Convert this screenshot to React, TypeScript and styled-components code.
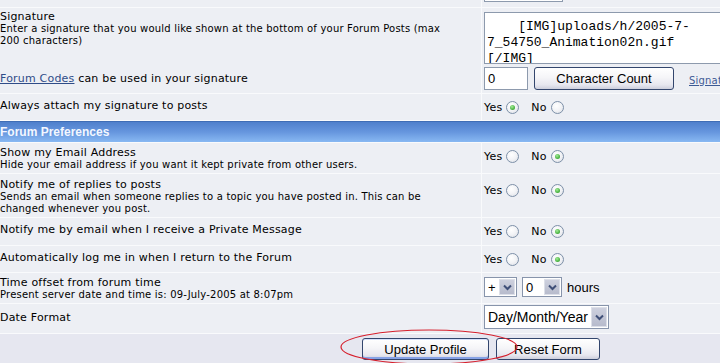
import React from 'react'
import styled, { createGlobalStyle, css } from 'styled-components'

const GlobalStyle = createGlobalStyle`
    html, body {
        margin: 0;
        padding: 0;
        overflow: hidden;
        background: #e6e7f0;
    }
    body {
        font-family: 'DejaVu Sans', Verdana, sans-serif;
        color: #000;
    }
`

function YesNo({ name, yes }: { name: string; yes: boolean }) {
    return (
        <Choice>
            <ChoiceLabel>
                Yes <Radio name={name} defaultChecked={yes} />
            </ChoiceLabel>
            <ChoiceLabel $second>
                No <Radio name={name} defaultChecked={!yes} />
            </ChoiceLabel>
        </Choice>
    )
}

function Select({ value, width, large }: { value: string; width: number; large?: boolean }) {
    return (
        <SelectBox $w={width} $large={large}>
            <SelectText>{value}</SelectText>
            <SelectArrow>
                <svg width="9" height="7" viewBox="0 0 9 7">
                    <polyline points="1,1.5 4.5,5 8,1.5" fill="none" stroke="#3f4f78" strokeWidth="2" />
                </svg>
            </SelectArrow>
        </SelectBox>
    )
}

export default function App() {
    return (
        <>
            <GlobalStyle />
            <Page>
                <Row $h={7}>
                    <Left />
                    <Right>
                        <CutInput />
                    </Right>
                </Row>

                <Row $h={85}>
                    <Left $pt={2}>
                        <Title>Signature</Title>
                        <Desc>
                            Enter a signature that you would like shown at the bottom of your Forum Posts (max
                            <br />
                            200 characters)
                        </Desc>
                        <Title $mt={25}>
                            <Link href="#">Forum Codes</Link> can be used in your signature
                        </Title>
                    </Left>
                    <Right $pt={4}>
                        <SigArea
                            readOnly
                            defaultValue={'    [IMG]uploads/h/2005-7-\n7_54750_Animation02n.gif\n[/IMG]'}
                        />
                        <Controls>
                            <CountInput readOnly defaultValue="0" />
                            <XpButton $w={140} $h={23}>Character Count</XpButton>
                            <SmallLink href="#">Signat</SmallLink>
                        </Controls>
                    </Right>
                </Row>

                <Row $h={26}>
                    <Left $pt={5}>
                        <Title>Always attach my signature to posts</Title>
                    </Left>
                    <Right $pt={5}>
                        <YesNo name="sig" yes />
                    </Right>
                </Row>

                <Ledger>Forum Preferences</Ledger>

                <Row $h={30}>
                    <Left $pt={3}>
                        <Title>Show my Email Address</Title>
                        <Desc>Hide your email address if you want it kept private from other users.</Desc>
                    </Left>
                    <Right $pt={5}>
                        <YesNo name="email" yes={false} />
                    </Right>
                </Row>

                <Row $h={43}>
                    <Left $pt={4}>
                        <Title>Notify me of replies to posts</Title>
                        <Desc>
                            Sends an email when someone replies to a topic you have posted in. This can be
                            <br />
                            changed whenever you post.
                        </Desc>
                    </Left>
                    <Right $pt={8}>
                        <YesNo name="replies" yes={false} />
                    </Right>
                </Row>

                <Row $h={27}>
                    <Left $pt={5}>
                        <Title>Notify me by email when I receive a Private Message</Title>
                    </Left>
                    <Right $pt={5}>
                        <YesNo name="pm" yes={false} />
                    </Right>
                </Row>

                <Row $h={26}>
                    <Left $pt={5}>
                        <Title>Automatically log me in when I return to the Forum</Title>
                    </Left>
                    <Right $pt={5}>
                        <YesNo name="autolog" yes={false} />
                    </Right>
                </Row>

                <Row $h={30}>
                    <Left $pt={3}>
                        <Title>Time offset from forum time</Title>
                        <Desc>Present server date and time is: 09-July-2005 at 8:07pm</Desc>
                    </Left>
                    <Right $pt={4}>
                        <Controls $gap={5}>
                            <Select value="+" width={33} />
                            <Select value="0" width={40} />
                            <Hours>hours</Hours>
                        </Controls>
                    </Right>
                </Row>

                <Row $h={29}>
                    <Left $pt={7}>
                        <Title>Date Format</Title>
                    </Left>
                    <Right $pt={1}>
                        <Select value="Day/Month/Year" width={125} large />
                    </Right>
                </Row>

                <ButtonRow>
                    <XpButton $w={127} $h={22} $default>Update Profile</XpButton>
                    <XpButton $w={104} $h={22}>Reset Form</XpButton>
                </ButtonRow>

                <Circle width="180" height="40" viewBox="0 0 180 40">
                    <ellipse cx="89" cy="18" rx="88" ry="17" fill="none" stroke="#d61f2c" strokeWidth="1.2" />
                </Circle>
            </Page>
        </>
    )
}

const Page = styled.div`
    position: relative;
    width: 962px;
    display: flex;
    flex-direction: column;
    gap: 1px;
    background: #f9fafc;
`

const Row = styled.div<{ $h: number }>`
    display: grid;
    grid-template-columns: 481px 1fr;
    column-gap: 1px;
    height: ${p => p.$h}px;
`

const Left = styled.div<{ $pt?: number }>`
    box-sizing: border-box;
    background: #edeff4;
    padding-top: ${p => p.$pt ?? 0}px;
    overflow: hidden;
    white-space: nowrap;
`

const Right = styled.div<{ $pt?: number }>`
    box-sizing: border-box;
    background: #edeff4;
    padding: ${p => p.$pt ?? 0}px 0 0 2px;
    overflow: hidden;
`

const Title = styled.div<{ $mt?: number }>`
    font-size: 11px;
    line-height: 13px;
    letter-spacing: 0.2px;
    margin-top: ${p => p.$mt ?? 0}px;
`

const Desc = styled.div`
    font-size: 10px;
    line-height: 12px;
    letter-spacing: 0.2px;
`

const Link = styled.a`
    color: #2f4c88;
    text-decoration: underline;
`

const SmallLink = styled.a`
    margin-left: 9px;
    margin-top: 4px;
    font-size: 10px;
    letter-spacing: 0.2px;
    color: #3d5a94;
    text-decoration: underline;
    white-space: nowrap;
`

const Ledger = styled.div`
    box-sizing: border-box;
    height: 21px;
    display: flex;
    align-items: center;
    border-top: 1px solid #3f6db5;
    background: linear-gradient(180deg, #4f80cc 0%, #6696de 50%, #88b8f2 100%);
    font-family: 'Liberation Sans', Arial, sans-serif;
    font-weight: bold;
    font-size: 12px;
    color: #f3f7ff;
`

const CutInput = styled.div`
    box-sizing: border-box;
    width: 79px;
    height: 20px;
    margin-top: -18px;
    border: 1px solid #8d9aad;
    background: #fff;
`

const SigArea = styled.textarea`
    display: block;
    box-sizing: border-box;
    width: 330px;
    height: 52px;
    margin: 0;
    padding: 6px 2px 0;
    border: 1px solid #8d9aad;
    background: #fff;
    font-family: 'Liberation Mono', 'Courier New', monospace;
    font-size: 13px;
    line-height: 16px;
    white-space: pre;
    overflow: hidden;
    resize: none;
    color: #000;
`

const Controls = styled.div<{ $gap?: number }>`
    display: flex;
    align-items: center;
    gap: ${p => p.$gap ?? 6}px;
    margin-top: ${p => (p.$gap ? 0 : 2)}px;
`

const CountInput = styled.input`
    box-sizing: border-box;
    width: 44px;
    height: 23px;
    margin: 1px 0 0;
    padding: 0 3px;
    border: 1px solid #8d9aad;
    background: #fff;
    font-family: 'Liberation Sans', Arial, sans-serif;
    font-size: 13px;
    color: #000;
`

const XpButton = styled.button<{ $w: number; $h: number; $default?: boolean }>`
    box-sizing: border-box;
    width: ${p => p.$w}px;
    height: ${p => p.$h}px;
    margin: 0;
    padding: 0;
    border: 1px solid #33466d;
    border-radius: 3px;
    background: linear-gradient(180deg, #ffffff 0%, #f5f5f8 45%, #e7e7ef 80%, #cdcfdc 100%);
    font-family: 'Liberation Sans', Arial, sans-serif;
    font-size: 13px;
    color: #000;
    ${p =>
        p.$default &&
        css`
            box-shadow: inset 0 -2px 0 #86a2e6, inset 0 1px 0 #d6e1fb;
        `}
`

const Choice = styled.div`
    display: flex;
    align-items: center;
    height: 17px;
    font-size: 11px;
    letter-spacing: 0.2px;
`

const ChoiceLabel = styled.label<{ $second?: boolean }>`
    display: flex;
    align-items: center;
    gap: 4px;
    margin-left: ${p => (p.$second ? 12 : 0)}px;
`

const Radio = styled.input.attrs({ type: 'radio' })`
    appearance: none;
    box-sizing: border-box;
    width: 13px;
    height: 13px;
    margin: 0;
    border: 1px solid #7d90a8;
    border-radius: 50%;
    background: radial-gradient(circle at 40% 35%, #ffffff 0%, #f2f3f6 50%, #d9dce3 100%);
    position: relative;

    &:checked::after {
        content: '';
        position: absolute;
        left: 3px;
        top: 3px;
        width: 5px;
        height: 5px;
        border-radius: 50%;
        background: radial-gradient(circle at 40% 35%, #a6ec9a 0%, #4cb544 60%, #2f8e2a 100%);
    }
`

const SelectBox = styled.div<{ $w: number; $large?: boolean }>`
    box-sizing: border-box;
    display: flex;
    width: ${p => p.$w}px;
    height: ${p => (p.$large ? 24 : 20)}px;
    border: 1px solid #8794ab;
    background: #fff;
    font-family: 'Liberation Sans', Arial, sans-serif;
    font-size: ${p => (p.$large ? 14 : 13)}px;
`

const SelectText = styled.span`
    flex: 1;
    display: flex;
    align-items: center;
    padding-left: 3px;
    white-space: nowrap;
    overflow: hidden;
`

const SelectArrow = styled.span`
    box-sizing: border-box;
    width: 16px;
    margin: 1px;
    display: flex;
    align-items: center;
    justify-content: center;
    border: 1px solid #dcdfe8;
    background: linear-gradient(180deg, #cdd0de 0%, #b7bbcc 100%);
`

const Hours = styled.span`
    font-family: 'Liberation Sans', Arial, sans-serif;
    font-size: 13px;
`

const ButtonRow = styled.div`
    height: 30px;
    box-sizing: border-box;
    padding-top: 4px;
    display: flex;
    justify-content: center;
    align-items: flex-start;
    gap: 7px;
    background: #e6e7f0;
`

const Circle = styled.svg`
    position: absolute;
    left: 340px;
    top: 329px;
    pointer-events: none;
`
